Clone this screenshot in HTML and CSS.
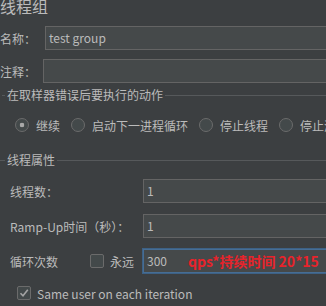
FILE: index.html
```html
<!DOCTYPE html>
<html lang="zh-CN">
<head>
  <meta charset="UTF-8" />
  <meta name="viewport" content="width=device-width, initial-scale=1.0"/>
  <title>线程组</title>
  <link rel="stylesheet" href="styles.css">
</head>
<body>
  <div class="panel">
    <div class="title">线程组</div>

    <div class="field-row name-row">
      <span class="field-label">名称：</span>
      <div class="text-field">test group</div>
    </div>
    <div class="field-row comment-row">
      <span class="field-label">注释：</span>
      <div class="text-field"></div>
    </div>

    <fieldset class="group error-group">
      <legend>在取样器错误后要执行的动作</legend>
      <div class="radios">
        <label class="radio"><span class="radio-mark checked"></span>继续</label>
        <label class="radio"><span class="radio-mark"></span>启动下一进程循环</label>
        <label class="radio"><span class="radio-mark"></span>停止线程</label>
        <label class="radio"><span class="radio-mark"></span>停止测试</label>
      </div>
    </fieldset>

    <fieldset class="group props-group">
      <legend>线程属性</legend>
      <div class="props">
        <div class="prop-row">
          <span class="prop-label">线程数：</span>
          <div class="text-field">1</div>
        </div>
        <div class="prop-row">
          <span class="prop-label">Ramp-Up时间（秒）：</span>
          <div class="text-field">1</div>
        </div>
        <div class="prop-row">
          <span class="prop-label loop-label">
            循环次数
            <span class="forever">
              <span class="checkbox"></span>永远
            </span>
          </span>
          <div class="text-field focused">
            <span>300</span>
            <span class="note">qps*持续时间 20*15</span>
          </div>
        </div>
        <div class="check-row">
          <span class="checkbox checked">
            <svg width="12" height="12" viewBox="0 0 12 12"><path d="M2.5 6.2 L5 8.8 L9.8 2.8" fill="none" stroke="#a4a4a4" stroke-width="1.6"/></svg>
          </span>
          Same user on each iteration
        </div>
      </div>
    </fieldset>
  </div>
</body>
</html>
```

FILE: styles.css
```css
html, body {
  margin: 0;
  padding: 0;
  height: 100%;
  overflow: hidden;
  background-color: #3c3f41;
  color: #bbbbbb;
  font-family: "Noto Sans CJK SC", "Noto Sans", sans-serif;
  font-size: 12px;
}

.panel {
  width: 380px;
  display: flex;
  flex-direction: column;
}

.title {
  font-size: 16px;
  line-height: 20px;
  margin-top: -4px;
}

.field-row {
  display: flex;
  align-items: center;
  height: 24px;
}

.name-row {
  margin-top: 10px;
}

.comment-row {
  margin-top: 9px;
}

.name-row .field-label {
  width: 45px;
}

.comment-row .field-label {
  width: 43px;
}

.text-field {
  flex: 1;
  box-sizing: border-box;
  height: 24px;
  border: 1px solid #646464;
  background-color: #45494a;
  padding-left: 3px;
  line-height: 22px;
  white-space: nowrap;
  display: flex;
  align-items: center;
}

.text-field.focused {
  border-color: #466d94;
  box-shadow: 0 0 0 1px #3d6185;
}

.note {
  margin-left: 21px;
  color: #e8232b;
  font-weight: bold;
  font-size: 14px;
}

/* titled borders */
.group {
  margin: 0;
  padding: 0;
  border: 0;
  border-top: 1px solid #56595b;
  min-width: 0;
}

.group legend {
  padding: 0 2px;
  line-height: 16px;
}

.error-group {
  margin: 4px 0 0 2px;
}

.error-group legend {
  margin-left: 3px;
}

.props-group {
  margin-top: 17px;
}

.props-group legend {
  margin-left: 5px;
}

.radios {
  display: flex;
  align-items: center;
  gap: 11px;
  height: 20px;
  padding: 12px 0 0 13px;
  white-space: nowrap;
}

.radio {
  display: flex;
  align-items: center;
  gap: 7px;
}

.radio-mark {
  width: 14px;
  height: 14px;
  box-sizing: border-box;
  border: 1px solid #6b6b6b;
  border-radius: 50%;
  background-color: #43494a;
}

.radio-mark.checked {
  background: radial-gradient(circle, #a8a8a8 0 2px, #43494a 2.6px);
}

.props {
  padding: 11px 0 0 10px;
}

.prop-row {
  display: flex;
  align-items: center;
  height: 24px;
}

.prop-row + .prop-row {
  margin-top: 11px;
}

.prop-label {
  width: 133px;
  flex: 0 0 auto;
}

.loop-label {
  display: flex;
  align-items: center;
}

.forever {
  margin-left: auto;
  margin-right: 9px;
  display: flex;
  align-items: center;
  gap: 6px;
}

.checkbox {
  width: 14px;
  height: 14px;
  box-sizing: border-box;
  border: 1px solid #6b6b6b;
  border-radius: 2px;
  background-color: #43494a;
  display: flex;
  align-items: center;
  justify-content: center;
}

.check-row {
  margin: 10px 0 0 7px;
  height: 20px;
  display: flex;
  align-items: center;
  gap: 6px;
}
```
